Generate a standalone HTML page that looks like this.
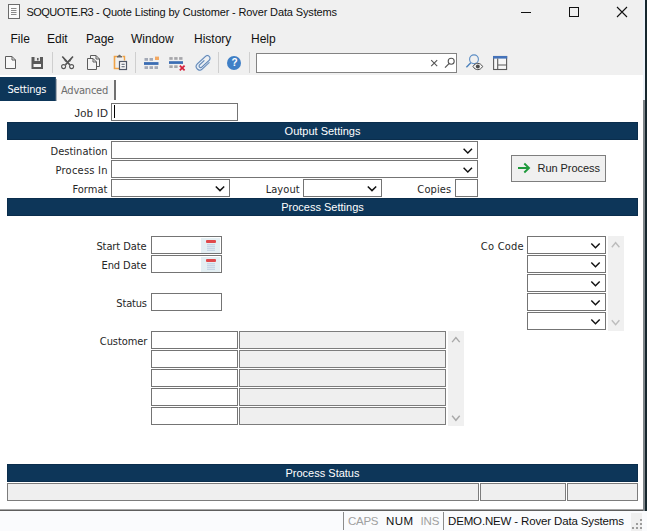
<!DOCTYPE html>
<html><head><meta charset="utf-8"><title>SOQUOTE.R3 - Quote Listing by Customer - Rover Data Systems</title>
<style>
html,body{margin:0;padding:0;}
body{width:647px;height:531px;overflow:hidden;position:relative;background:#fff;font-family:"Liberation Sans",sans-serif;font-size:11px;color:#1a1a1a;}
#win{position:absolute;left:0;top:0;width:647px;height:531px;overflow:hidden;background:#fff;}
#win div,#win svg,#win span{position:absolute;}
#chrome{left:0;top:0;width:643px;height:75px;background:#f0f0f0;}
#title{left:26.5px;top:5px;font-size:11px;letter-spacing:-0.14px;white-space:nowrap;line-height:14px;color:#111;}
.menu{top:32px;font-size:12px;line-height:14px;white-space:nowrap;color:#111;}
.lbl{font-family:"DejaVu Sans Condensed","Liberation Sans",sans-serif;font-size:11px;line-height:14px;white-space:nowrap;color:#262626;}
.bar{left:7px;width:631px;height:18px;background:#0d3659;box-shadow:inset 0 0 0 1px #0a2d4c;color:#fff;font-size:11px;line-height:18px;text-align:center;white-space:nowrap;}
.inp{background:#fff;border:1px solid #747474;box-sizing:border-box;height:18px;}
.ro{background:#efefef;border:1px solid #7c7c7c;box-sizing:border-box;height:18px;}
.sb{background:#f0f0f0;}
.sep{width:1px;height:21px;top:52px;background:#cfcfcf;}
.st{top:513.5px;font-size:11.5px;line-height:14px;white-space:nowrap;letter-spacing:-0.1px;}
</style></head><body>
<div id="win">
  <div id="chrome"></div>
  <svg style="left:7px;top:3px" width="14" height="17" viewBox="0 0 14 17"><rect x="1.5" y="1.5" width="11" height="14" fill="#fbfbfb" stroke="#6c6c6c" stroke-width="1"/><path d="M4 5.5h5.5M4 7.5h5.5M4 9.5h5.5M4 11.5h5.5" stroke="#8a8a8a" stroke-width="1"/></svg>
  <div id="title"><span style="position:static;letter-spacing:-0.55px">SOQUOTE.R3</span> - Quote Listing by Customer - Rover Data Systems</div>
  <svg style="left:515px;top:0" width="128" height="26" viewBox="0 0 128 26">
    <path d="M6 12.5h10" stroke="#111" stroke-width="1"/>
    <rect x="54.5" y="7.5" width="9" height="9" fill="none" stroke="#111" stroke-width="1"/>
    <path d="M102 7l10 10M112 7l-10 10" stroke="#111" stroke-width="1.1"/>
  </svg>
  <div class="menu" style="left:10.5px">File</div>
  <div class="menu" style="left:47px">Edit</div>
  <div class="menu" style="left:86px">Page</div>
  <div class="menu" style="left:131px">Window</div>
  <div class="menu" style="left:194px">History</div>
  <div class="menu" style="left:251px">Help</div>
  <!-- toolbar -->
  <div style="left:256px;top:53px;width:201px;height:20px;background:#fff;border:1px solid #838383;box-sizing:border-box"></div>
  <svg style="left:0;top:50px" width="520" height="25" viewBox="0 50 520 25">
    <!-- new -->
    <path d="M5.5 56.5h6.5l3.5 3.5v8.5h-10z" fill="#f8f8f8" stroke="#5c5c5c" stroke-width="1"/>
    <path d="M12 56.5v3.5h3.5" fill="none" stroke="#5c5c5c" stroke-width="1"/>
    <!-- save -->
    <path d="M31.5 57h11.5v12h-11.5z" fill="#5a5a5a"/>
    <rect x="34.5" y="57" width="5.5" height="4" fill="#e8e8e8"/>
    <rect x="37" y="58" width="1.6" height="2.4" fill="#5a5a5a"/>
    <rect x="33.5" y="64" width="7.5" height="3" fill="#f4f4f4"/>
    <!-- scissors -->
    <path d="M62.3 56.5l7.6 8.4M73 56.5l-7.6 8.4" stroke="#555" stroke-width="1.6" fill="none"/>
    <path d="M62.3 56.5l3 5.5 1.6-1.6zM73 56.5l-3 5.5-1.6-1.6z" fill="#555"/>
    <circle cx="63.6" cy="66.6" r="2" fill="#f6f6f6" stroke="#555" stroke-width="1.1"/>
    <circle cx="71.6" cy="66.6" r="2" fill="#f6f6f6" stroke="#555" stroke-width="1.1"/>
    <!-- copy -->
    <path d="M90.5 55.5h5.5l3.5 3.5v7.5h-9z" fill="#f4f4f4" stroke="#5c5c5c" stroke-width="1"/>
    <path d="M96 55.500v3.500h3.500" fill="none" stroke="#5c5c5c" stroke-width="1"/>
    <path d="M87.500 58.500h5.500l3.500 3.500v7.500h-9z" fill="#f4f4f4" stroke="#5c5c5c" stroke-width="1"/>
    <path d="M93 58.500v3.500h3.500" fill="none" stroke="#5c5c5c" stroke-width="1"/>
    <!-- paste -->
    <path d="M118 56.500h-3.500v12h4.500" fill="none" stroke="#f0a347" stroke-width="1.6"/>
    <path d="M122.500 56.500h2v4" fill="none" stroke="#f0a347" stroke-width="1.4"/>
    <path d="M117 57.500v-1.500h1.200c0-1.600 2.600-1.600 2.600 0h1.200v1.500z" fill="#6a6a6a"/>
    <rect x="119.500" y="61.500" width="7" height="8" fill="#fafafa" stroke="#4f5766" stroke-width="1.200"/>
    <path d="M121.500 64.300h3.200M121.500 66.700h3.200" stroke="#4f5766" stroke-width="1.100"/>
    <!-- insert row -->
    <rect x="144.500" y="58" width="3.500" height="2.800" fill="#a3a9b6"/>
    <rect x="149.500" y="58" width="3.500" height="2.800" fill="#a3a9b6"/>
    <rect x="155" y="56.600" width="4" height="3.400" fill="#f3a862"/>
    <rect x="144" y="62.100" width="14.500" height="2.800" fill="#3b6db3"/>
    <rect x="144.500" y="66.200" width="3.500" height="2.800" fill="#a3a9b6"/>
    <rect x="149.500" y="66.200" width="3.500" height="2.800" fill="#a3a9b6"/>
    <rect x="154.500" y="66.200" width="3.500" height="2.800" fill="#a3a9b6"/>
    <!-- delete row -->
    <rect x="169.300" y="57.100" width="3.400" height="2.700" fill="#a6a6aa"/>
    <rect x="174.200" y="57.100" width="3.400" height="2.700" fill="#a6a6aa"/>
    <rect x="179.100" y="57.100" width="3.400" height="2.700" fill="#a6a6aa"/>
    <rect x="169" y="61.200" width="14" height="2.700" fill="#3b6db3"/>
    <rect x="169.300" y="65.300" width="3.400" height="2.700" fill="#a6a6aa"/>
    <rect x="174.200" y="65.300" width="3.400" height="2.700" fill="#a6a6aa"/>
    <path d="M179.800 65.600l4.800 4.800M184.600 65.600l-4.800 4.800" stroke="#d7213d" stroke-width="1.700"/>
    <!-- paperclip -->
    <g transform="translate(203.400 63.100) rotate(-43)" fill="none">
      <path d="M5 3.500L-5 3.500A3.500 3.500 0 0 1 -5 -3.500L6.100 -3.500A2.700 2.700 0 0 1 6.100 1.900L-4 1.900A1.600 1.600 0 0 1 -4 -1.300L2.500 -1.300" stroke="#dce9f6" stroke-width="2.400"/>
      <path d="M5 3.500L-5 3.500A3.500 3.500 0 0 1 -5 -3.500L6.100 -3.500A2.700 2.700 0 0 1 6.100 1.900L-4 1.900A1.600 1.600 0 0 1 -4 -1.300L2.500 -1.300" stroke="#5f82b0" stroke-width="1"/>
    </g>
    <!-- help -->
    <circle cx="234" cy="63" r="7" fill="#3f7fc6"/>
    <!-- search icons -->
    <path d="M431.200 60.200l6 6M437.200 60.200l-6 6" stroke="#555" stroke-width="1.100"/>
    <circle cx="451.200" cy="61.300" r="3" fill="none" stroke="#555" stroke-width="1.100"/>
    <path d="M449 63.600l-4 4" stroke="#555" stroke-width="1.300"/>
    <!-- search eye -->
    <circle cx="474" cy="59.300" r="4.400" fill="#f0f0f0" stroke="#5a8cc4" stroke-width="1.100"/>
    <path d="M470.800 62.700l-4.400 4.600" stroke="#4d82bc" stroke-width="1.400"/>
    <path d="M473 66.500c2.300-4.200 7.300-4.200 9.600 0c-2.300 4.200-7.300 4.200-9.600 0z" fill="#f6f6f6" stroke="#4a4a4a" stroke-width="1"/>
    <circle cx="477.800" cy="66.500" r="2" fill="#4a4a4a"/>
    <!-- layout -->
    <rect x="493.600" y="56.500" width="13" height="13" fill="#f7f7f7" stroke="#5a5a5a" stroke-width="1.100"/>
    <rect x="493" y="56" width="14.200" height="2.600" fill="#4573ba"/>
    <path d="M497.700 58.500v11M497.700 65h9" stroke="#5a5a5a" stroke-width="1.100" fill="none"/>
  </svg>
  <div style="left:231px;top:56px;width:7px;text-align:center;color:#fff;font-weight:bold;font-size:10px;line-height:14px">?</div>
  <div class="sep" style="left:52px"></div>
  <div class="sep" style="left:135px"></div>
  <div class="sep" style="left:218px"></div>
  <div class="sep" style="left:249px"></div>
  <!-- tabs -->
  <div style="left:0;top:77px;width:55px;height:24px;background:#0d3659;"></div>
  <div style="left:55px;top:77px;width:1px;height:24px;background:#33526f;"></div>
  <div style="left:56px;top:79px;width:1px;height:22px;background:#a9b1b9;"></div>
  <div class="lbl" style="left:7.500px;top:83px;color:#fff;letter-spacing:-0.230px">Settings</div>
  <div style="left:57px;top:80px;width:57px;height:20px;background:#f5f5f5;"></div>
  <div style="left:114px;top:80px;width:2px;height:20px;background:#707070;"></div>
  <div class="lbl" style="left:61px;top:84px;color:#6c6c6c;letter-spacing:-0.230px">Advanced</div>
  <div class="lbl" style="right:538.65px;top:106px;letter-spacing:0.35px;font-family:'Liberation Sans',sans-serif">Job ID</div>
  <div class="inp" style="left:111px;top:103px;width:127px"></div>
  <div style="left:114px;top:105px;width:1px;height:13px;background:#000"></div>
  <div class="bar" style="top:122px">Output Settings</div>
  <div class="lbl" style="right:539.48px;top:145px;letter-spacing:0.02px">Destination</div>
  <div class="inp" style="left:111px;top:141px;width:367px"></div>
  <svg style="left:0;top:0" width="647" height="531" viewBox="0 0 647 531"><path d="M463.6 148.7l4.2 4.2l4.2 -4.2" fill="none" stroke="#111" stroke-width="1.45"/></svg>
  <div class="lbl" style="right:539.26px;top:164px;letter-spacing:0.24px">Process In</div>
  <div class="inp" style="left:111px;top:160px;width:367px"></div>
  <svg style="left:0;top:0" width="647" height="531" viewBox="0 0 647 531"><path d="M463.6 167.7l4.2 4.2l4.2 -4.2" fill="none" stroke="#111" stroke-width="1.45"/></svg>
  <div class="lbl" style="right:539.44px;top:183px;letter-spacing:0.06px">Format</div>
  <div class="inp" style="left:111px;top:179px;width:119px"></div>
  <svg style="left:0;top:0" width="647" height="531" viewBox="0 0 647 531"><path d="M215.8 186.4l4.2 4.2l4.2 -4.2" fill="none" stroke="#111" stroke-width="1.45"/></svg>
  <div class="lbl" style="right:347.34px;top:183px;letter-spacing:0.06px">Layout</div>
  <div class="inp" style="left:303px;top:179px;width:79px"></div>
  <svg style="left:0;top:0" width="647" height="531" viewBox="0 0 647 531"><path d="M367.8 186.4l4.2 4.2l4.2 -4.2" fill="none" stroke="#111" stroke-width="1.45"/></svg>
  <div class="lbl" style="right:195.68px;top:183px;letter-spacing:0.12px">Copies</div>
  <div class="inp" style="left:455px;top:179px;width:23px"></div>
  <div style="left:511px;top:155px;width:95px;height:27px;background:#f0f0f0;border:1px solid #7e7e7e;box-sizing:border-box"></div>
  <div style="left:537.500px;top:161px;font-size:11px;line-height:14px;color:#222;white-space:nowrap;letter-spacing:-0.050px">Run Process</div>
  <svg style="left:516px;top:161px" width="16" height="14" viewBox="516 161 16 14"><path d="M518 168h10M524.300 163.500l4.700 4.500l-4.700 4.500" fill="none" stroke="#1f9a3c" stroke-width="1.900"/></svg>
  <div class="bar" style="top:198px">Process Settings</div>
  <div class="lbl" style="right:500.6px;top:240px;letter-spacing:-0.1px">Start Date</div>
  <div class="inp" style="left:151px;top:236px;width:71px"></div>
  <div class="lbl" style="right:500.58px;top:259px;letter-spacing:-0.08px">End Date</div>
  <div class="inp" style="left:151px;top:255px;width:71px"></div>
  <div style="left:201px;top:238px;width:19px;height:15px;background:#e4eff3"></div>
  <div style="left:206px;top:240px;width:10px;height:3px;background:#e04a4c;border-radius:1px"></div>
  <div style="left:207px;top:244px;width:8px;height:7px;background:repeating-linear-gradient(#c6d6e6 0 1px,#dbe6ee 1px 2px)"></div>
  <div style="left:201px;top:257px;width:19px;height:15px;background:#e4eff3"></div>
  <div style="left:206px;top:259px;width:10px;height:3px;background:#e04a4c;border-radius:1px"></div>
  <div style="left:207px;top:263px;width:8px;height:7px;background:repeating-linear-gradient(#c6d6e6 0 1px,#dbe6ee 1px 2px)"></div>
  <div class="lbl" style="right:500.17px;top:297px;letter-spacing:-0.17px">Status</div>
  <div class="inp" style="left:151px;top:293px;width:71px"></div>
  <div class="lbl" style="right:499.67px;top:335px;letter-spacing:-0.07px">Customer</div>
  <div class="inp" style="left:151px;top:331px;width:87px"></div>
  <div class="ro" style="left:239px;top:331px;width:207px"></div>
  <div class="inp" style="left:151px;top:350px;width:87px"></div>
  <div class="ro" style="left:239px;top:350px;width:207px"></div>
  <div class="inp" style="left:151px;top:369px;width:87px"></div>
  <div class="ro" style="left:239px;top:369px;width:207px"></div>
  <div class="inp" style="left:151px;top:388px;width:87px"></div>
  <div class="ro" style="left:239px;top:388px;width:207px"></div>
  <div class="inp" style="left:151px;top:407px;width:87px"></div>
  <div class="ro" style="left:239px;top:407px;width:207px"></div>
  <div class="sb" style="left:448px;top:331px;width:16px;height:95px"></div>
  <svg style="left:0;top:0" width="647" height="531" viewBox="0 0 647 531"><path d="M452.1 342.1l3.8 -4.5l3.8 4.5" fill="none" stroke="#a9a9a9" stroke-width="1.4"/></svg>
  <svg style="left:0;top:0" width="647" height="531" viewBox="0 0 647 531"><path d="M452.1 415.8l3.8 4.5l3.8 -4.5" fill="none" stroke="#a9a9a9" stroke-width="1.4"/></svg>
  <div class="lbl" style="right:123.05999999999996px;top:240px;letter-spacing:0.24px">Co Code</div>
  <div class="inp" style="left:527px;top:236px;width:79px"></div>
  <svg style="left:0;top:0" width="647" height="531" viewBox="0 0 647 531"><path d="M591.3 243.6l4.2 4.2l4.2 -4.2" fill="none" stroke="#111" stroke-width="1.45"/></svg>
  <div class="inp" style="left:527px;top:255px;width:79px"></div>
  <svg style="left:0;top:0" width="647" height="531" viewBox="0 0 647 531"><path d="M591.3 262.6l4.2 4.2l4.2 -4.2" fill="none" stroke="#111" stroke-width="1.45"/></svg>
  <div class="inp" style="left:527px;top:274px;width:79px"></div>
  <svg style="left:0;top:0" width="647" height="531" viewBox="0 0 647 531"><path d="M591.3 281.6l4.2 4.2l4.2 -4.2" fill="none" stroke="#111" stroke-width="1.45"/></svg>
  <div class="inp" style="left:527px;top:293px;width:79px"></div>
  <svg style="left:0;top:0" width="647" height="531" viewBox="0 0 647 531"><path d="M591.3 300.6l4.2 4.2l4.2 -4.2" fill="none" stroke="#111" stroke-width="1.45"/></svg>
  <div class="inp" style="left:527px;top:312px;width:79px"></div>
  <svg style="left:0;top:0" width="647" height="531" viewBox="0 0 647 531"><path d="M591.3 319.6l4.2 4.2l4.2 -4.2" fill="none" stroke="#111" stroke-width="1.45"/></svg>
  <div class="sb" style="left:608px;top:236px;width:16px;height:95px"></div>
  <svg style="left:0;top:0" width="647" height="531" viewBox="0 0 647 531"><path d="M611.8 247.2l3.8 -4.5l3.8 4.5" fill="none" stroke="#bdbdbd" stroke-width="1.4"/></svg>
  <svg style="left:0;top:0" width="647" height="531" viewBox="0 0 647 531"><path d="M611.8 320.2l3.8 4.5l3.8 -4.5" fill="none" stroke="#bdbdbd" stroke-width="1.4"/></svg>
  <div class="bar" style="top:464px">Process Status</div>
  <div class="ro" style="left:7px;top:483px;width:472px"></div>
  <div class="ro" style="left:480px;top:483px;width:86px"></div>
  <div class="ro" style="left:567px;top:483px;width:71px"></div>
  <!-- bottom border + status bar -->
  <div style="left:0;top:509px;width:643px;height:1px;background:#a8a8a8"></div>
  <div style="left:0;top:510px;width:643px;height:1px;background:#5e5e5e"></div>
  <div style="left:0;top:511px;width:647px;height:20px;background:#fafbfd"></div>
  <div style="left:343px;top:512px;width:1px;height:18px;background:#8c8c8c"></div>
  <div style="left:443px;top:512px;width:1px;height:18px;background:#8c8c8c"></div>
  <div class="st" style="left:348px;color:#a0a0a0;letter-spacing:-0.3px">CAPS</div>
  <div class="st" style="left:386px;color:#111;letter-spacing:0.5px">NUM</div>
  <div class="st" style="left:420.5px;color:#a0a0a0">INS</div>
  <div class="st" style="left:448px;color:#111;letter-spacing:-0.15px">DEMO.NEW - Rover Data Systems</div>
  <div style="left:631px;top:513px;width:11px;height:18px;background:#efefef"></div>
  <svg style="left:631px;top:513px" width="12" height="18" viewBox="631 513 12 18"><g fill="#9c9c9c"><rect x="640" y="519" width="2" height="2"/><rect x="636" y="523" width="2" height="2"/><rect x="640" y="523" width="2" height="2"/><rect x="632" y="527" width="2" height="2"/><rect x="636" y="527" width="2" height="2"/><rect x="640" y="527" width="2" height="2"/></g></svg>
  <!-- right edge -->
  <div style="left:643px;top:0;width:2px;height:100px;background:#edf3fa"></div>
  <div style="left:643px;top:100px;width:2px;height:411px;background:#7e8589"></div>
  <div style="left:645px;top:0;width:2px;height:511px;background:#17272e"></div>
</div>
</body></html>
